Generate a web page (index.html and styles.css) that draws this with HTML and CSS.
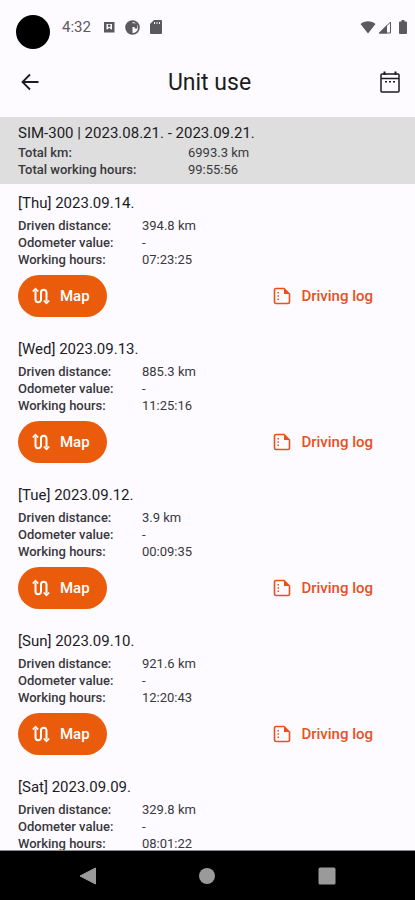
FILE: index.html
```html
<!DOCTYPE html>
<html lang="en">
<head>
  <meta charset="UTF-8">
  <meta name="viewport" content="width=device-width, initial-scale=1.0">
  <title>Unit use</title>
  <link rel="stylesheet" href="styles.css">
</head>
<body>
  <svg class="sprite" aria-hidden="true">
    <symbol id="icon-route" viewBox="0 0 18 18">
      <path d="M3.500 3.500v9a2.750 2.750 0 0 0 5.500 0v-7a2.750 2.750 0 0 1 5.500 0v9" fill="none" stroke="currentColor" stroke-width="2"/>
      <path d="M0.800 4.500L3.500 1.700l2.700 2.800M11.800 13.500l2.700 2.800 2.700-2.800" fill="none" stroke="currentColor" stroke-width="1.800"/>
    </symbol>
    <symbol id="icon-log" viewBox="0 0 18 18">
      <path d="M11 1.500H3A1.500 1.500 0 0 0 1.500 3v12A1.500 1.500 0 0 0 3 16.500h12a1.500 1.500 0 0 0 1.500-1.500V7z" fill="none" stroke="currentColor" stroke-width="1.600"/>
      <path d="M11 1.500V7h5.500z" fill="currentColor"/>
      <path d="M4.500 5H6v1.500H4.500zM4.500 8.300H6v1.500H4.500zM4.500 11.600H6v1.500H4.500z" fill="currentColor"/>
    </symbol>
  </svg>

  <div class="status-bar">
    <span class="camera"></span>
    <div class="status-items">
      <span class="clock">4:32</span>
      <svg class="status-icon" viewBox="0 0 14 14"><path fill="currentColor" fill-rule="evenodd" d="M2 2h10.500v10.500H2zM4.500 4v5.500h.8L7.200 7.800l2 1.700h.8V4z"/><circle cx="7.200" cy="5.800" r="1.400" fill="currentColor"/></svg>
      <svg class="status-icon wide" viewBox="0 0 14 14"><circle cx="7" cy="7" r="6" fill="none" stroke="currentColor" stroke-width="1.600"/><path fill="currentColor" d="M7 1a6 6 0 0 0-3 11l3 1zM7 3h4.500v5H9v-1.500H7z"/></svg>
      <svg class="status-icon" viewBox="0 0 14 14"><path fill="currentColor" fill-rule="evenodd" d="M5 0h7a1 1 0 0 1 1 1v12a1 1 0 0 1-1 1H2a1 1 0 0 1-1-1V4zM5 2v2h1V2zM7.500 2v2h1V2zM10 2v2h1V2z"/></svg>
      <svg class="status-icon wifi" viewBox="0 0 16 14"><path fill="currentColor" d="M8 13.500L0.500 4C4.500 0.300 11.500 0.300 15.500 4z"/></svg>
      <svg class="status-icon signal" viewBox="0 0 14 14"><path fill="currentColor" d="M0.500 13.500L9 5v8.500z"/><path fill="none" stroke="currentColor" d="M1.500 13L12.500 2v11z"/></svg>
      <svg class="status-icon battery" viewBox="0 0 10 14"><path fill="currentColor" d="M3.500 0h3v1.500H8a1 1 0 0 1 1 1V13a1 1 0 0 1-1 1H2a1 1 0 0 1-1-1V2.500a1 1 0 0 1 1-1h1.500z"/></svg>
    </div>
  </div>

  <header class="app-bar">
    <button class="icon-button" type="button" aria-label="Back">
      <svg width="22" height="22" viewBox="0 0 22 22"><path d="M20.500 11H5M12 3.500L4.500 11l7.500 7.500" fill="none" stroke="currentColor" stroke-width="1.800"/></svg>
    </button>
    <h1>Unit use</h1>
    <button class="icon-button" type="button" aria-label="Select dates">
      <svg width="22" height="22" viewBox="0 0 22 22"><path d="M3 3h16a1 1 0 0 1 1 1v16a1 1 0 0 1-1 1H3a1 1 0 0 1-1-1V4a1 1 0 0 1 1-1zM2 7.500h18" fill="none" stroke="currentColor" stroke-width="1.500"/><path d="M4.500 0.500h2V4h-2zM15.500 0.500h2V4h-2zM6 10h2v1.500H6zM10 10h2v1.500h-2zM14 10h2v1.500h-2z" fill="currentColor"/></svg>
    </button>
  </header>

  <section class="summary">
    <h2>SIM-300 | 2023.08.21. - 2023.09.21.</h2>
    <dl class="details">
      <dt>Total km:</dt><dd>6993.3 km</dd>
      <dt>Total working hours:</dt><dd>99:55:56</dd>
    </dl>
  </section>

  <main class="days">
    <article class="day">
      <h2>[Thu] 2023.09.14.</h2>
      <dl class="details">
        <dt>Driven distance:</dt><dd>394.8 km</dd>
        <dt>Odometer value:</dt><dd>-</dd>
        <dt>Working hours:</dt><dd>07:23:25</dd>
      </dl>
      <div class="actions">
        <button class="btn btn-map" type="button"><svg><use href="#icon-route"/></svg>Map</button>
        <button class="btn btn-log" type="button"><svg><use href="#icon-log"/></svg>Driving log</button>
      </div>
    </article>
    <article class="day">
      <h2>[Wed] 2023.09.13.</h2>
      <dl class="details">
        <dt>Driven distance:</dt><dd>885.3 km</dd>
        <dt>Odometer value:</dt><dd>-</dd>
        <dt>Working hours:</dt><dd>11:25:16</dd>
      </dl>
      <div class="actions">
        <button class="btn btn-map" type="button"><svg><use href="#icon-route"/></svg>Map</button>
        <button class="btn btn-log" type="button"><svg><use href="#icon-log"/></svg>Driving log</button>
      </div>
    </article>
    <article class="day">
      <h2>[Tue] 2023.09.12.</h2>
      <dl class="details">
        <dt>Driven distance:</dt><dd>3.9 km</dd>
        <dt>Odometer value:</dt><dd>-</dd>
        <dt>Working hours:</dt><dd>00:09:35</dd>
      </dl>
      <div class="actions">
        <button class="btn btn-map" type="button"><svg><use href="#icon-route"/></svg>Map</button>
        <button class="btn btn-log" type="button"><svg><use href="#icon-log"/></svg>Driving log</button>
      </div>
    </article>
    <article class="day">
      <h2>[Sun] 2023.09.10.</h2>
      <dl class="details">
        <dt>Driven distance:</dt><dd>921.6 km</dd>
        <dt>Odometer value:</dt><dd>-</dd>
        <dt>Working hours:</dt><dd>12:20:43</dd>
      </dl>
      <div class="actions">
        <button class="btn btn-map" type="button"><svg><use href="#icon-route"/></svg>Map</button>
        <button class="btn btn-log" type="button"><svg><use href="#icon-log"/></svg>Driving log</button>
      </div>
    </article>
    <article class="day">
      <h2>[Sat] 2023.09.09.</h2>
      <dl class="details">
        <dt>Driven distance:</dt><dd>329.8 km</dd>
        <dt>Odometer value:</dt><dd>-</dd>
        <dt>Working hours:</dt><dd>08:01:22</dd>
      </dl>
    </article>
  </main>

  <nav class="system-nav">
    <button type="button" aria-label="Back"><svg width="18" height="18" viewBox="0 0 18 18"><path d="M1 9L16.500 1v16z" fill="currentColor" stroke="currentColor" stroke-linejoin="round"/></svg></button>
    <button type="button" aria-label="Home"><svg width="18" height="18" viewBox="0 0 18 18"><circle cx="9" cy="9" r="8" fill="currentColor"/></svg></button>
    <button type="button" aria-label="Recent apps"><svg width="18" height="18" viewBox="0 0 18 18"><rect x="0.500" y="0.500" width="17" height="17" rx="1.500" fill="currentColor"/></svg></button>
  </nav>
</body>
</html>
```

FILE: styles.css
```css
* {
  box-sizing: border-box;
}
body {
  display: flex;
  flex-direction: column;
  height: 100vh;
  margin: 0;
  background-color: #fdfbff;
  color: #1c1b1f;
  font-family: Roboto, "Liberation Sans", sans-serif;
}
h1, h2, dl, dd {
  margin: 0;
}
button {
  padding: 0;
  border: none;
  background: none;
  color: inherit;
  font-family: inherit;
  cursor: pointer;
}
svg {
  display: block;
}
.sprite {
  display: none;
}

/* status bar */
.status-bar {
  display: flex;
  gap: 12px;
  padding: 15px 7px 0 16px;
}
.camera {
  width: 34px;
  height: 34px;
  border-radius: 50%;
  background-color: #000;
}
.status-items {
  display: flex;
  flex: 1;
  align-items: center;
  height: 24px;
  color: #5a595d;
}
.clock {
  margin-right: 11px;
  font-size: 15px;
}
.status-icon {
  width: 14px;
  height: 14px;
  margin-right: 9px;
}
.status-icon.wide {
  width: 15px;
  height: 15px;
}
.status-icon.wifi {
  width: 16px;
  margin-left: auto;
  margin-right: 2px;
}
.status-icon.signal {
  margin-right: 6px;
}
.status-icon.battery {
  width: 10px;
  margin-right: 0;
}

/* app bar */
.app-bar {
  display: flex;
  align-items: center;
  justify-content: space-between;
  height: 68px;
  padding: 0 14px 2px 18px;
}
.app-bar h1 {
  font-size: 23px;
  font-weight: 400;
}

/* totals and day list */
.summary {
  padding: 6px 18px;
  background-color: #dedede;
}
h2 {
  font-size: 15px;
  line-height: 20px;
  font-weight: 400;
}
.details {
  display: grid;
  grid-template-columns: 124px 1fr;
  font-size: 13px;
  line-height: 17px;
  color: #39383c;
}
.details dt {
  font-weight: 500;
}
.summary .details {
  grid-template-columns: 170px 1fr;
  margin-top: 1px;
}
.days {
  flex: 1;
  min-height: 0;
  overflow-y: auto;
  scrollbar-width: none;
}
.day {
  padding: 9px 18px 13px;
}
.day .details {
  margin: 4px 0 7px;
}
.actions {
  display: flex;
  justify-content: space-between;
}
.btn {
  display: flex;
  align-items: center;
  gap: 10px;
  height: 42px;
  font-size: 15px;
  font-weight: 500;
}
.btn svg {
  width: 18px;
  height: 18px;
}
.btn-map {
  padding: 0 17px 0 14px;
  border-radius: 21px;
  background-color: #ea5b0c;
  color: #fff;
}
.btn-log {
  padding: 0 24px;
  color: #e8501e;
}

/* system navigation */
.system-nav {
  display: flex;
  align-items: center;
  justify-content: space-around;
  height: 50px;
  padding: 0 28px;
  border-top: 1px solid #8a8a8a;
  background-color: #000;
  color: #9a9a9a;
}
```
